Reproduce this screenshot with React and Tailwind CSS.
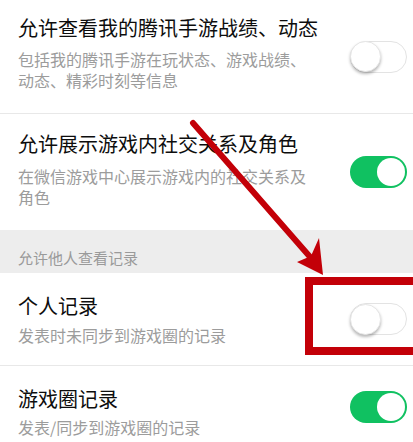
export default function App() {
  const Toggle = ({ on }) =>
    on ? (
      <div className="w-[57px] h-[32px] rounded-full bg-[#10c161] flex items-center justify-end p-[2px]">
        <div className="w-[28px] h-[28px] rounded-full bg-white" />
      </div>
    ) : (
      <div className="w-[57px] h-[32px] rounded-full bg-white border border-[#e3e3e3] flex items-center">
        <div className="w-[31px] h-[31px] -ml-px rounded-full bg-white shadow-[0_2px_3px_rgba(0,0,0,0.28)] border border-[#e6e6e6]" />
      </div>
    )

  const Row = ({ title, sub, on, pt, gap, pb, divider }) => (
    <div className="flex bg-white">
      <div className={`flex-1 flex pl-[18px] ${divider ? 'border-b border-[#e8e8e8]' : ''}`}>
        <div className="flex-1 flex flex-col" style={{ paddingTop: pt, paddingBottom: pb }}>
          <div className="text-[20px] leading-[28px] text-[#0d0d0d]">{title}</div>
          <div className="w-[296px] text-[16px] leading-[21px] text-[#9c9c9c]" style={{ marginTop: gap }}>{sub}</div>
        </div>
        <div className="self-center shrink-0 mr-[6px]">
          <Toggle on={on} />
        </div>
      </div>
    </div>
  )

  return (
    <div
      className="relative w-[413px] h-[442px] overflow-hidden bg-white"
      style={{ fontFamily: '"Noto Sans CJK SC", "Noto Sans", sans-serif' }}
    >
      <Row title="允许查看我的腾讯手游战绩、动态" sub="包括我的腾讯手游在玩状态、游戏战绩、动态、精彩时刻等信息" pt={14} gap={7} pb={22} divider />
      <Row title="允许展示游戏内社交关系及角色" sub="在微信游戏中心展示游戏内的社交关系及角色" on pt={16} gap={8} pb={22} />
      <div className="bg-[#ededed] pl-[18px] pt-[17px] pb-[5px] text-[15px] leading-[21px] text-[#9a9a9a]">允许他人查看记录</div>
      <Row title="个人记录" sub="发表时未同步到游戏圈的记录" pt={19} gap={5} pb={19} divider />
      <Row title="游戏圈记录" sub="发表/同步到游戏圈的记录" on pt={19} gap={4} pb={10} />

      <div className="absolute left-[305px] top-[277px] w-[120px] h-[78px] border-[8px] border-[#c30008]" />
      <svg className="absolute left-0 top-0 pointer-events-none" width="413" height="442" viewBox="0 0 413 442">
        <line x1="193" y1="123" x2="311" y2="258" stroke="#c30008" strokeWidth="6" strokeLinecap="round" />
        <path d="M323 275 L297 262 L311 256 L319 238 Z" fill="#c30008" />
      </svg>
    </div>
  )
}
